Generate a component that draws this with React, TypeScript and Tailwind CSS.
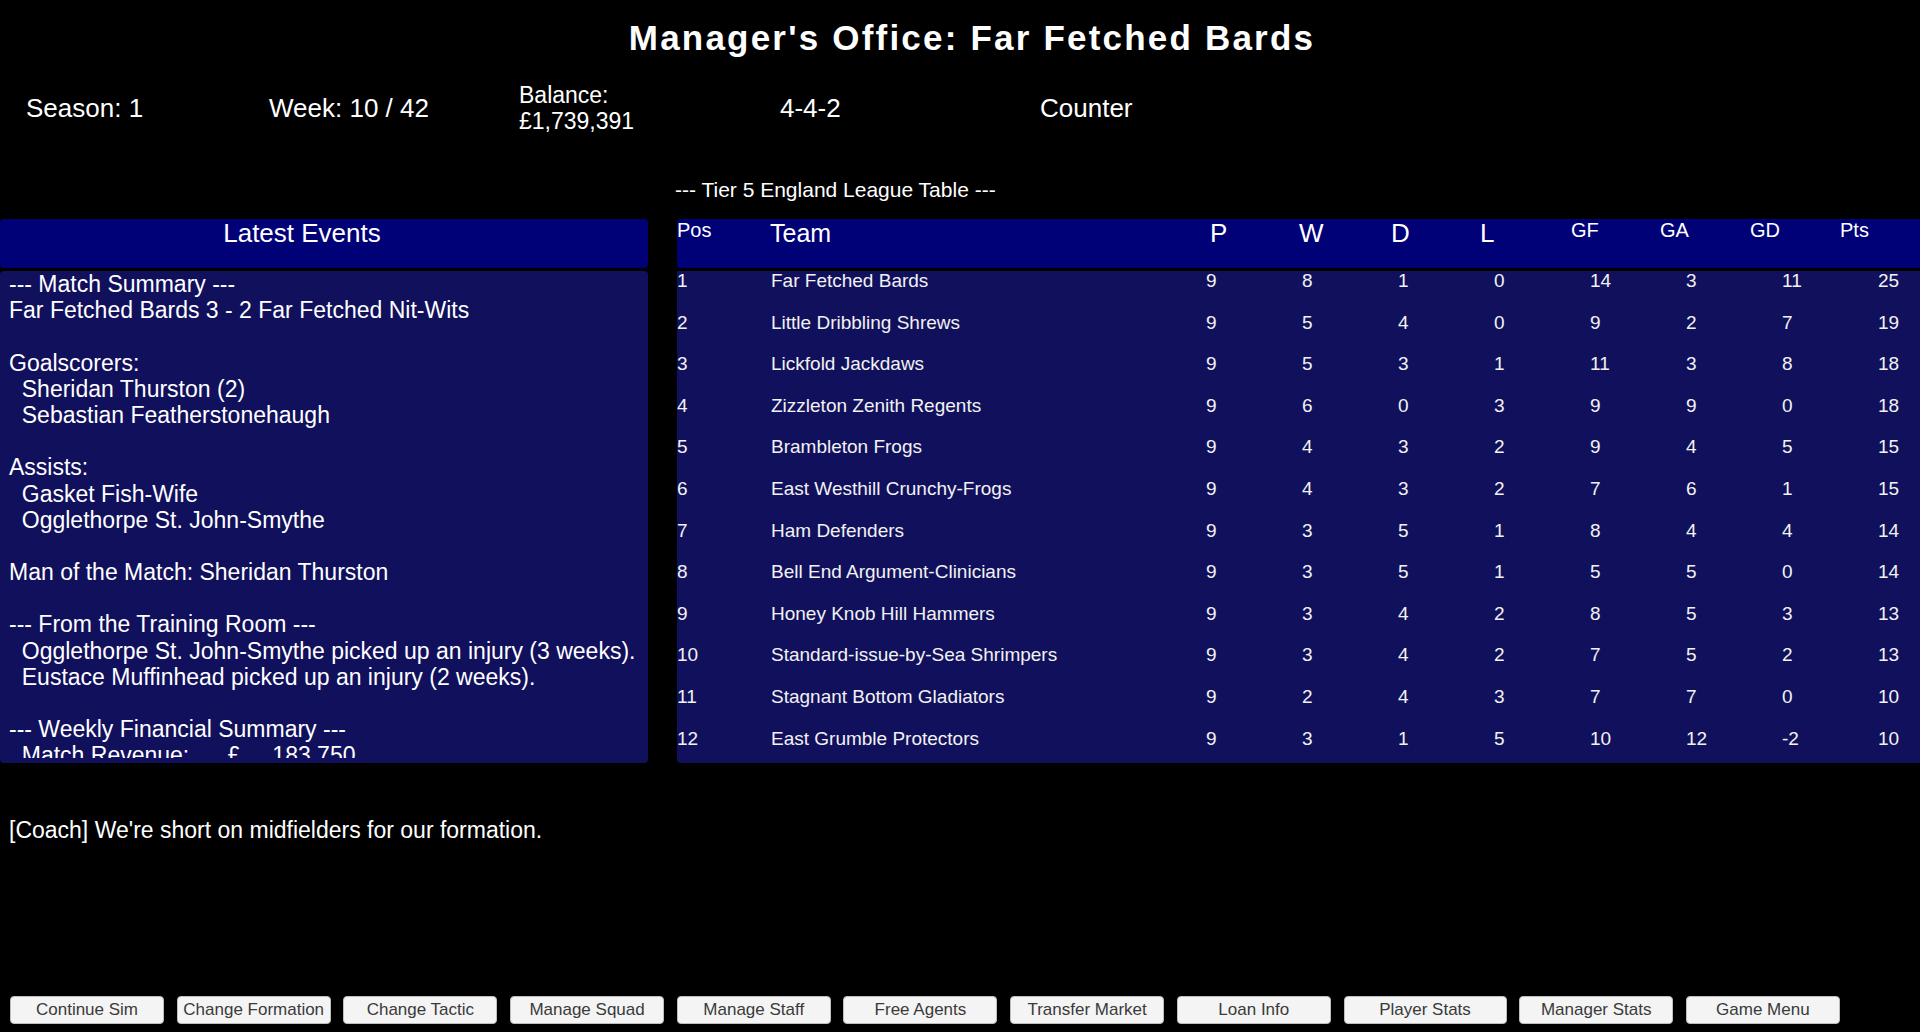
import React from 'react';

// =============================================================================
// Data
// =============================================================================

type Row = [number, string, number, number, number, number, number, number, number, number];

const leagueRows: Row[] = [
  [1, 'Far Fetched Bards', 9, 8, 1, 0, 14, 3, 11, 25],
  [2, 'Little Dribbling Shrews', 9, 5, 4, 0, 9, 2, 7, 19],
  [3, 'Lickfold Jackdaws', 9, 5, 3, 1, 11, 3, 8, 18],
  [4, 'Zizzleton Zenith Regents', 9, 6, 0, 3, 9, 9, 0, 18],
  [5, 'Brambleton Frogs', 9, 4, 3, 2, 9, 4, 5, 15],
  [6, 'East Westhill Crunchy-Frogs', 9, 4, 3, 2, 7, 6, 1, 15],
  [7, 'Ham Defenders', 9, 3, 5, 1, 8, 4, 4, 14],
  [8, 'Bell End Argument-Clinicians', 9, 3, 5, 1, 5, 5, 0, 14],
  [9, 'Honey Knob Hill Hammers', 9, 3, 4, 2, 8, 5, 3, 13],
  [10, 'Standard-issue-by-Sea Shrimpers', 9, 3, 4, 2, 7, 5, 2, 13],
  [11, 'Stagnant Bottom Gladiators', 9, 2, 4, 3, 7, 7, 0, 10],
  [12, 'East Grumble Protectors', 9, 3, 1, 5, 10, 12, -2, 10],
];

// Scrolling event log; the last line is partly hidden by the panel mask
const eventLines = [
  '--- Match Summary ---',
  'Far Fetched Bards 3 - 2 Far Fetched Nit-Wits',
  '',
  'Goalscorers:',
  '  Sheridan Thurston (2)',
  '  Sebastian Featherstonehaugh',
  '',
  'Assists:',
  '  Gasket Fish-Wife',
  '  Ogglethorpe St. John-Smythe',
  '',
  'Man of the Match: Sheridan Thurston',
  '',
  '--- From the Training Room ---',
  '  Ogglethorpe St. John-Smythe picked up an injury (3 weeks).',
  '  Eustace Muffinhead picked up an injury (2 weeks).',
  '',
  '--- Weekly Financial Summary ---',
  '  Match Revenue:      £     183,750',
];

const actions = [
  'Continue Sim',
  'Change Formation',
  'Change Tactic',
  'Manage Squad',
  'Manage Staff',
  'Free Agents',
  'Transfer Market',
  'Loan Info',
  'Player Stats',
  'Manager Stats',
  'Game Menu',
];

// =============================================================================
// Components
// =============================================================================

const LeagueTable: React.FC = () => (
  <div className="flex flex-col gap-[3px]">
    {/* Header */}
    <div className="h-[49px] bg-[#000077] rounded-l-[4px] grid grid-cols-[93px_440px_89px_92px_89px_91px_89px_90px_90px_1fr] items-start">
      <span className="text-[20px] leading-[22px]">Pos</span>
      <span className="text-[25px] leading-[28px]">Team</span>
      <span className="text-[26px] leading-[28px]">P</span>
      <span className="text-[26px] leading-[28px]">W</span>
      <span className="text-[26px] leading-[28px]">D</span>
      <span className="text-[26px] leading-[28px]">L</span>
      <span className="text-[20px] leading-[22px]">GF</span>
      <span className="text-[20px] leading-[22px]">GA</span>
      <span className="text-[20px] leading-[22px]">GD</span>
      <span className="text-[20px] leading-[22px]">Pts</span>
    </div>

    {/* Rows */}
    <div className="h-[492px] bg-[#11105c] rounded-bl-[4px] overflow-hidden">
      {leagueRows.map((row) => (
        <div
          key={row[0]}
          className="h-[41.6px] grid grid-cols-[94px_435px_96px_96px_96px_96px_96px_96px_96px_1fr] items-start text-[19px] leading-[20px] text-[#f2f2f2]"
        >
          {row.map((cell, i) => (
            <span key={i}>{cell}</span>
          ))}
        </div>
      ))}
    </div>
  </div>
);

const LatestEvents: React.FC = () => (
  <div className="flex flex-col gap-[3px]">
    <div className="h-[49px] bg-[#000077] rounded-[4px] text-center pr-[44px] text-[26px] leading-[28px]">
      Latest Events
    </div>
    <div className="h-[492px] bg-[#11105c] rounded-[4px]">
      <div className="h-[487px] overflow-hidden px-[9px] text-[23px] leading-[26.2px] whitespace-pre">
        {eventLines.map((line, i) => (
          <div key={i} className="h-[26.2px]">
            {line}
          </div>
        ))}
      </div>
    </div>
  </div>
);

// =============================================================================
// Page
// =============================================================================

export default function App() {
  return (
    <div className="w-[1920px] h-[1032px] bg-black text-white flex flex-col overflow-hidden font-['Liberation_Sans',Arial,sans-serif]">
      {/* Title */}
      <h1 className="pt-[17px] pl-[24px] text-center text-[35px] leading-[42px] font-bold tracking-[2.2px]">
        Manager's Office: Far Fetched Bards
      </h1>

      {/* Status bar */}
      <div className="mt-[19px] h-[60px] flex items-center pl-[26px] text-[26px]">
        <div className="w-[243px]">Season: 1</div>
        <div className="w-[250px]">Week: 10 / 42</div>
        <div className="w-[261px] text-[23px] leading-[26px]">
          <div>Balance:</div>
          <div>£1,739,391</div>
        </div>
        <div className="w-[260px]">4-4-2</div>
        <div>Counter</div>
      </div>

      {/* Main panels */}
      <div className="grid grid-cols-[648px_1fr] gap-x-[29px]">
        <div className="h-[81px]" />
        <div className="h-[81px] pt-[40px] -ml-[2px] text-[21px] leading-[24px]">
          --- Tier 5 England League Table ---
        </div>
        <LatestEvents />
        <LeagueTable />
      </div>

      {/* Coach message */}
      <p className="mt-[54px] pl-[9px] text-[23px] leading-[26px]">
        [Coach] We're short on midfielders for our formation.
      </p>

      {/* Actions */}
      <div className="mt-auto mb-[8px] pl-[10px] flex gap-[12.7px]">
        {actions.map((label) => (
          <button
            key={label}
            className={
              label === 'Player Stats'
                ? 'w-[163px] h-[28px] rounded-[4px] bg-[#f4f4f4] border border-[#bdbdbd] text-[#3a3a3a] text-[17px] leading-[20px]'
                : 'w-[154px] h-[28px] rounded-[4px] bg-[#f4f4f4] border border-[#bdbdbd] text-[#3a3a3a] text-[17px] leading-[20px]'
            }
          >
            {label}
          </button>
        ))}
      </div>
    </div>
  );
}
